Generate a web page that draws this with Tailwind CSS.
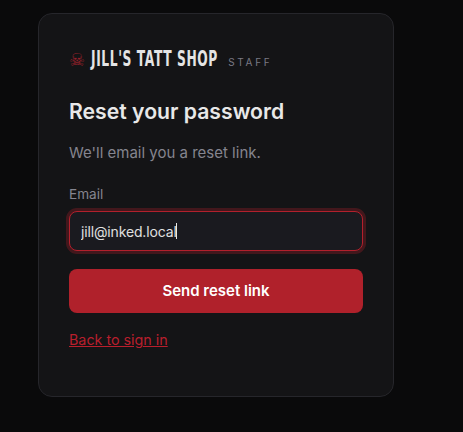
<!DOCTYPE html>
<html lang="en">
<head>
    <meta charset="UTF-8">
    <meta name="viewport" content="width=device-width, initial-scale=1.0">
    <title>Reset your password</title>
    <script src="https://cdn.jsdelivr.net/npm/@tailwindcss/browser@4"></script>
</head>
<body class="bg-[#0a0a0b] min-h-screen font-['Inter',sans-serif] overflow-hidden">
    <main class="pt-[13px] pl-[38px]">
        <div class="w-[356px] h-[384px] bg-[#141416] border border-[#26262b] rounded-[14px] pt-[30px] px-[30px]">
            <!-- Brand -->
            <div class="flex items-baseline h-[30px]">
                <span class="font-['DejaVu_Sans',sans-serif] text-[18px] leading-[30px] text-[#98202a]">☠</span>
                <span class="ml-[6px] font-['DejaVu_Sans',sans-serif] font-bold text-[21px] tracking-[1px] leading-[30px] text-[#e4e4e4] inline-block origin-left scale-x-[0.585] w-[125px] whitespace-nowrap">JILL'S TATT SHOP</span>
                <span class="ml-[12px] text-[10px] tracking-[0.27em] text-[#7a7a84]">STAFF</span>
            </div>

            <h1 class="mt-[22px] text-[21.2px] leading-[30px] font-semibold text-[#e8e8e8]">Reset your password</h1>
            <p class="mt-[16px] text-[15px] leading-[22px] text-[#85858f]">We'll email you a reset link.</p>

            <form class="mt-[20px]">
                <label for="email" class="block text-[13.6px] leading-[20px] text-[#85858f]">Email</label>
                <div class="relative mt-[7px]">
                    <input id="email" type="email" value="jill@inked.local" class="w-full h-[40px] px-[11px] bg-[#1a1a1f] border border-[#b3202c] rounded-[8px] text-[14px] tracking-[-0.15px] text-[#e0e0e0] outline-none shadow-[0_0_0_3px_rgba(179,32,44,0.3)]">
                    <span class="absolute left-[107px] top-[12px] w-px h-[16px] bg-[#e8e8e8]"></span>
                </div>
                <button type="button" class="mt-[18px] w-full h-[44px] bg-[#b0212b] rounded-[8px] text-[15px] font-semibold text-white">Send reset link</button>
            </form>

            <a href="#" class="block mt-[17px] text-[14.3px] leading-[20px] text-[#b91f2d] underline">Back to sign in</a>
        </div>
    </main>
</body>
</html>
